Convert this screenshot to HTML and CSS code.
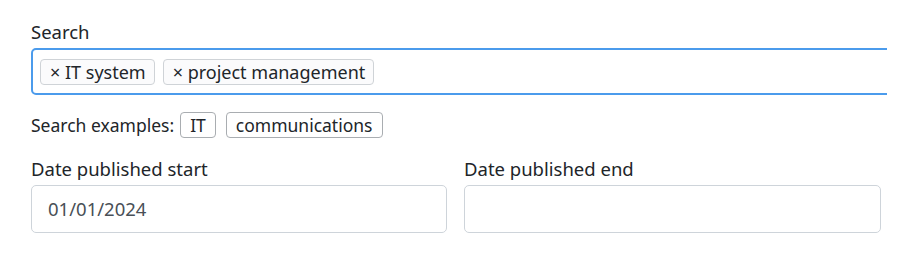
FILE: index.html
```html
<!DOCTYPE html>
<html>
<head>
<meta charset="utf-8">
<link rel="stylesheet" href="styles.css">
</head>
<body>
<div class="page">
  <div class="field">
    <label class="label">Search</label>
    <div class="search-clip">
      <div class="search-box">
        <span class="tag">× IT system</span>
        <span class="tag">× project management</span>
      </div>
    </div>
  </div>
  <div class="examples">
    <span class="examples-text">Search examples:</span>
    <button class="example">IT</button>
    <button class="example">communications</button>
  </div>
  <div class="dates">
    <div class="field">
      <label class="label">Date published start</label>
      <div class="input">01/01/2024</div>
    </div>
    <div class="field">
      <label class="label">Date published end</label>
      <div class="input"></div>
    </div>
  </div>
</div>
</body>
</html>
```
FILE: styles.css
```css
* { box-sizing: border-box; }
html, body { margin: 0; padding: 0; background: #fff; }
body {
  font-family: "Noto Sans", "Open Sans", sans-serif;
  font-size: 18.5px;
  color: #212529;
}
.page {
  padding: 19px 0 0 31px;
}
.field { display: flex; flex-direction: column; }
.label {
  display: block;
  line-height: 26px;
  height: 29px;
}
.search-clip {
  width: 856px;
  overflow: hidden;
}
.search-box {
  width: 900px;
  height: 47px;
  border: 2px solid #4b9bec;
  border-radius: 5px;
  display: flex;
  align-items: center;
  gap: 8px;
  padding: 0 0 0 7px;
}
.tag {
  display: inline-block;
  height: 26px;
  line-height: 24px;
  font-size: 18px;
  padding: 0 8px 0 9px;
  border: 1px solid #cfd3d7;
  border-radius: 4px;
  background: #fbfbfc;
  white-space: nowrap;
}
.examples {
  display: flex;
  align-items: center;
  gap: 10px;
  margin-top: 17px;
  height: 26px;
}
.examples-text { font-size: 17.5px; margin-right: -4px; }
.example {
  font-family: inherit;
  font-size: 17.5px;
  color: #212529;
  background: #fff;
  border: 1px solid #a9adb1;
  border-radius: 4px;
  height: 26px;
  line-height: 24px;
  padding: 0 9px;
  margin: 0;
}
.dates {
  display: grid;
  grid-template-columns: 416px 417px;
  column-gap: 17px;
  margin-top: 18px;
}
.input {
  height: 48px;
  border: 1px solid #ced4da;
  border-radius: 5px;
  padding: 0 16px;
  line-height: 46px;
  color: #495057;
}
```
